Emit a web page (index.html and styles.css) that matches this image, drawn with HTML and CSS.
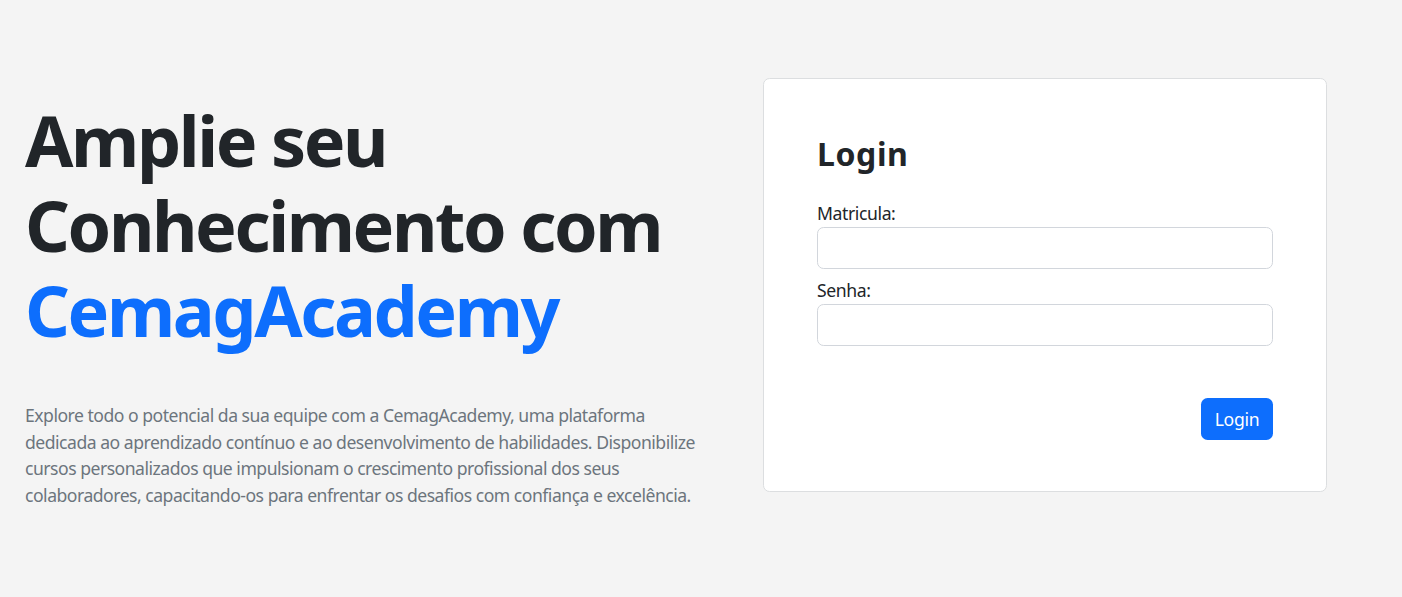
FILE: index.html
```html
<!DOCTYPE html>
<html lang="pt-BR">
<head>
<meta charset="utf-8">
<title>CemagAcademy - Login</title>
<link rel="stylesheet" href="styles.css">
</head>
<body>
<main class="page">
  <section class="intro">
    <h1 class="hero-title">Amplie seu<br>Conhecimento com<br><span class="brand">CemagAcademy</span></h1>
    <p class="hero-text">Explore todo o potencial da sua equipe com a CemagAcademy, uma plataforma dedicada ao aprendizado contínuo e ao desenvolvimento de habilidades. Disponibilize cursos personalizados que impulsionam o crescimento profissional dos seus colaboradores, capacitando-os para enfrentar os desafios com confiança e excelência.</p>
  </section>
  <section class="card">
    <h2 class="card-title">Login</h2>
    <form class="login-form">
      <label class="field-label" for="matricula">Matricula:</label>
      <input class="field-input" id="matricula" type="text">
      <label class="field-label second" for="senha">Senha:</label>
      <input class="field-input" id="senha" type="password">
      <div class="actions">
        <button class="btn-login" type="button">Login</button>
      </div>
    </form>
  </section>
</main>
</body>
</html>
```
FILE: styles.css
```css
* { box-sizing: border-box; }
html, body { margin: 0; padding: 0; }
body {
  background: #f4f4f4;
  color: #212529;
  font-family: "Noto Sans", "Open Sans", sans-serif;
  font-size: 17.6px;
  line-height: 1.5;
}
.page {
  display: flex;
  align-items: flex-start;
  gap: 50px;
  padding: 78px 75px 0 25px;
  min-height: 597px;
}
.intro {
  width: 688px;
  padding-top: 20px;
}
.hero-title {
  margin: 0 0 49px;
  font-size: 70px;
  line-height: 85px;
  font-weight: 700;
  letter-spacing: -2.4px;
  color: #212529;
}
.brand { color: #0d6efd; }
.hero-text {
  margin: 0;
  color: #6c757d;
  font-size: 17.6px;
  line-height: 26.6px;
  letter-spacing: -0.5px;
}
.card {
  width: 564px;
  background: #fff;
  border: 1px solid #dcdee0;
  border-radius: 6.6px;
  padding: 56px 53px 51px;
}
.card-title {
  margin: 0 0 26.6px;
  font-size: 32px;
  line-height: 38.4px;
  font-weight: 700;
  letter-spacing: 0.6px;
}
.login-form { display: flex; flex-direction: column; }
.field-label {
  display: block;
  font-size: 17.6px;
  line-height: 26.4px;
  letter-spacing: -0.4px;
}
.field-label.second { margin-top: 8px; }
.field-input {
  display: block;
  width: 100%;
  height: 41.6px;
  margin-top: 1px;
  border: 1px solid #d2d6dc;
  border-radius: 6.6px;
  background: #fff;
  font: inherit;
  padding: 6.6px 13.2px;
}
.actions {
  display: flex;
  justify-content: flex-end;
  margin-top: 52.3px;
}
.btn-login {
  height: 41.6px;
  width: 72px;
  padding: 0;
  border: none;
  border-radius: 6.6px;
  background: #0d6efd;
  color: #fff;
  font-family: inherit;
  font-size: 17.6px;
  letter-spacing: -0.3px;
}
```
